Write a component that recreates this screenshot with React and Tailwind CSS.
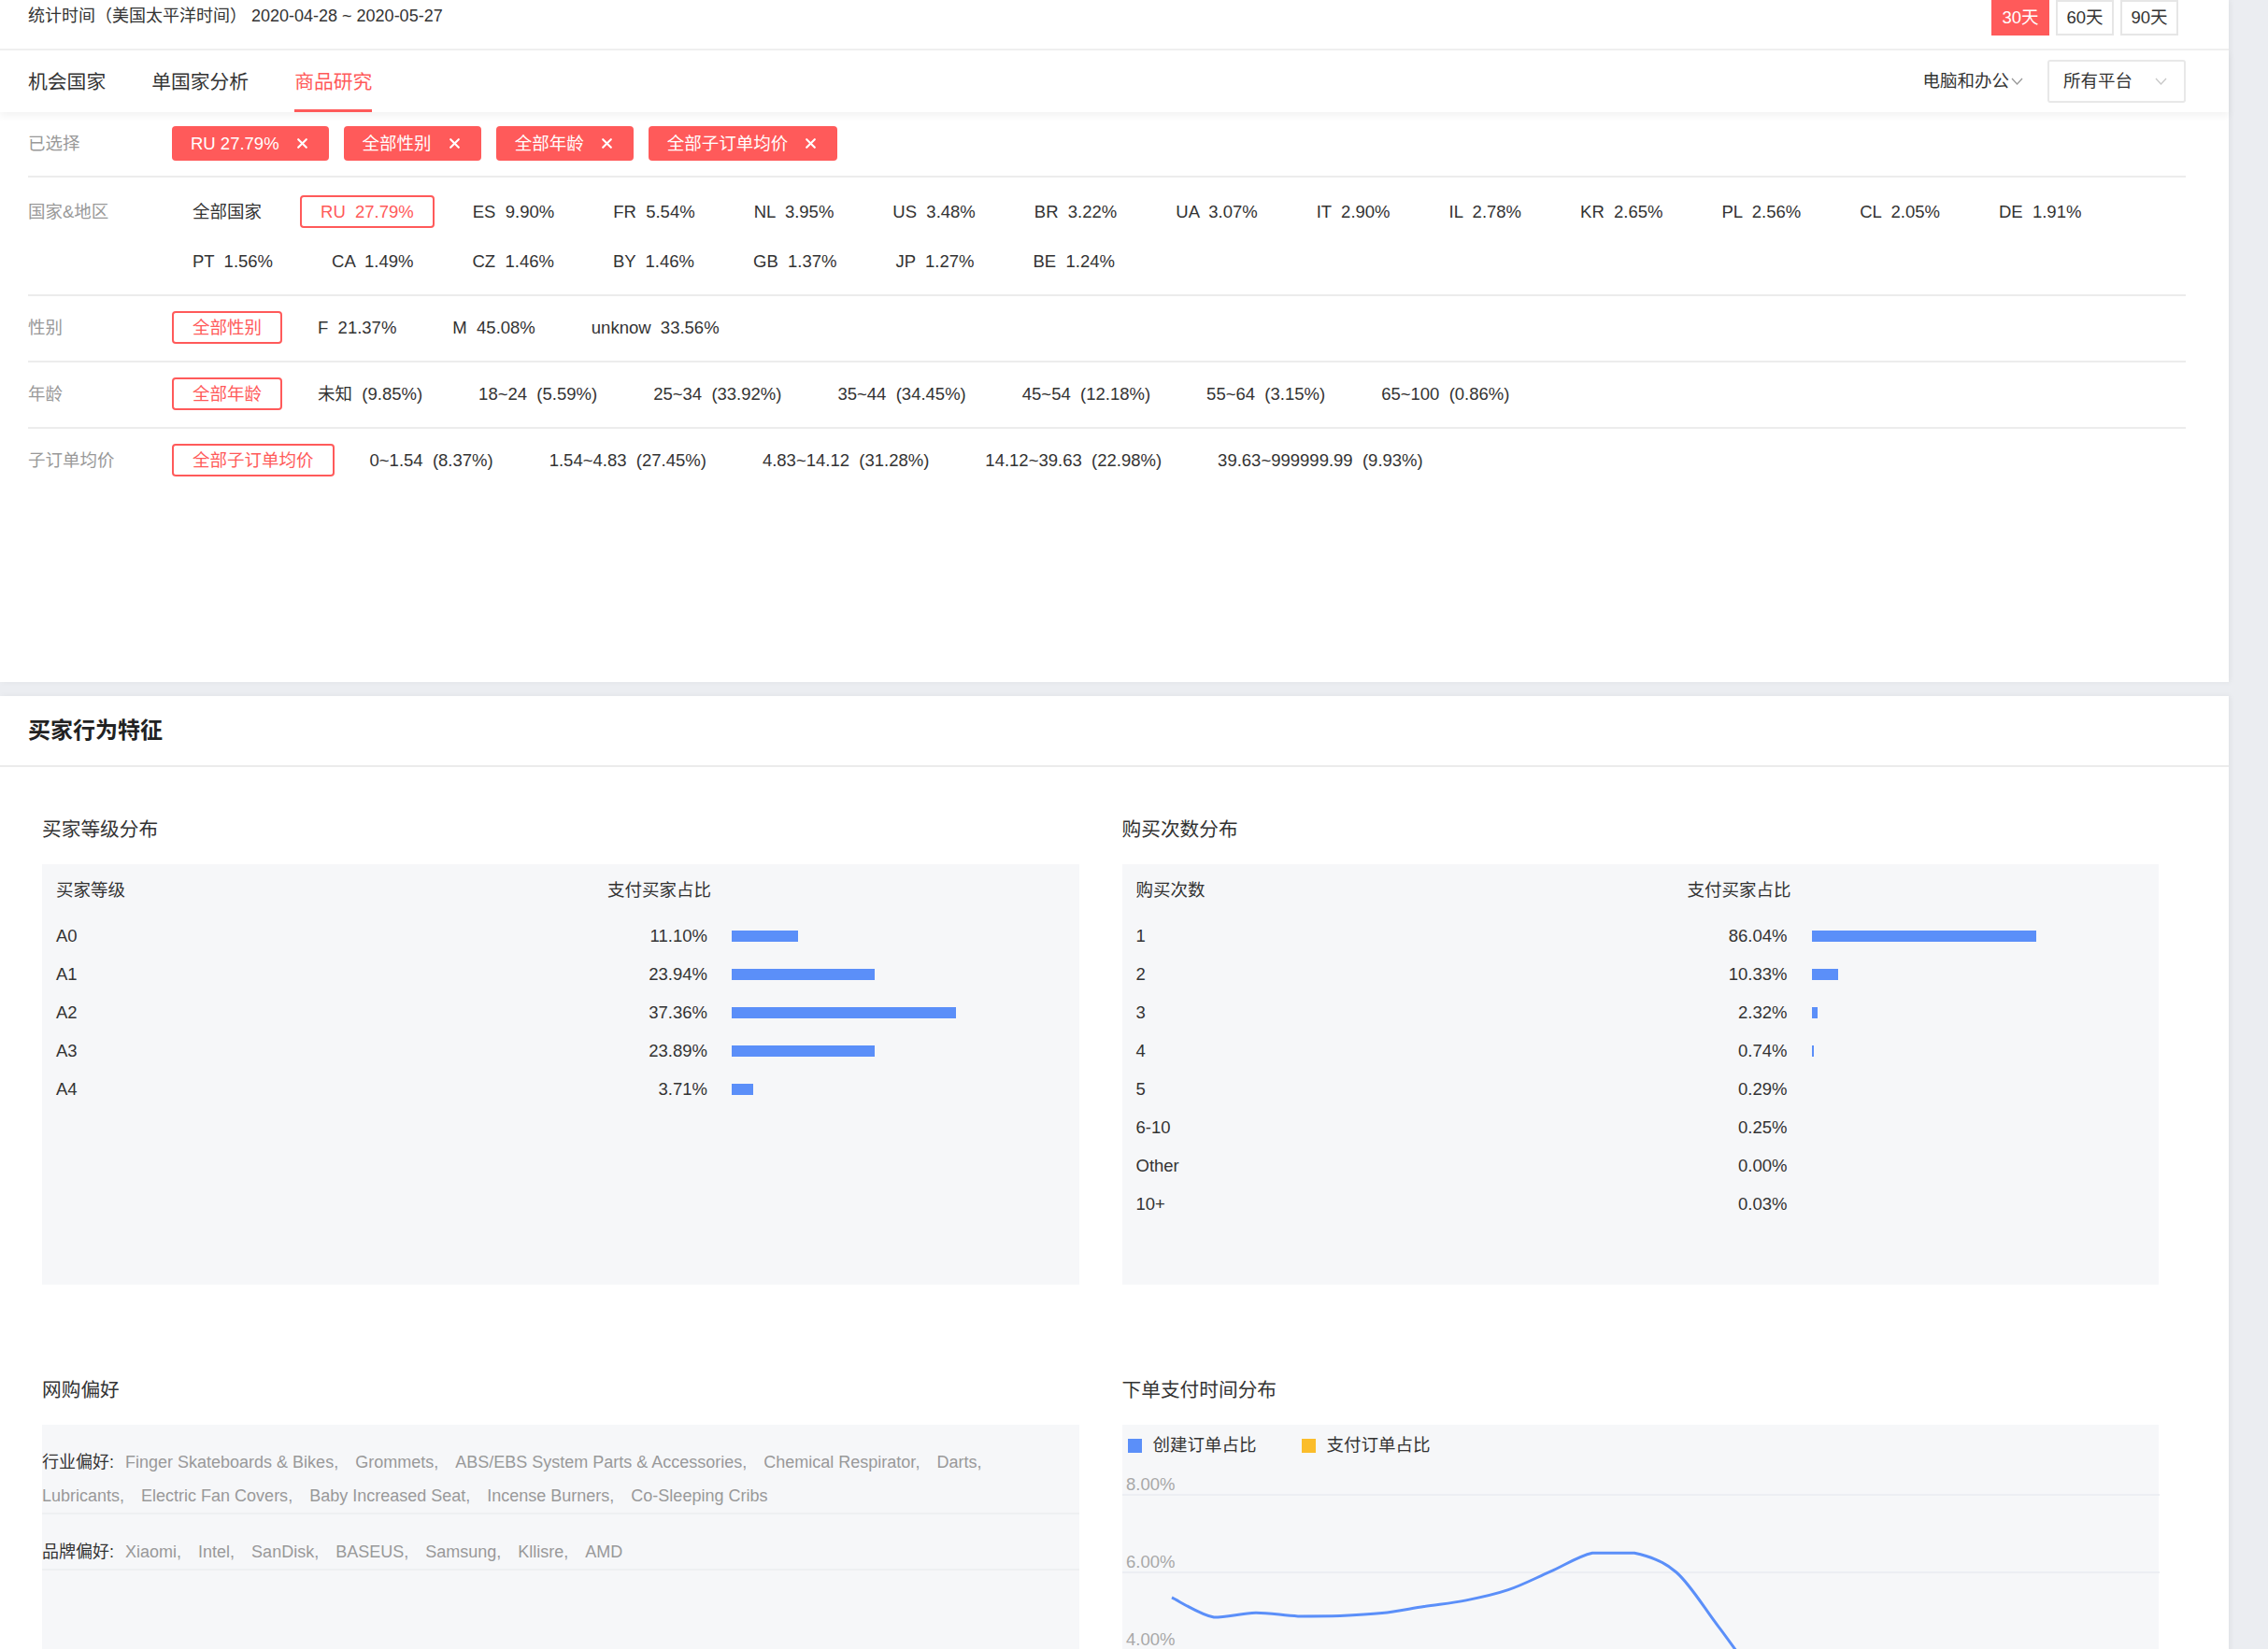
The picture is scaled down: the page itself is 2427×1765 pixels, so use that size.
import React from "react";

function Chevron({ color = "#999" }) {
  return (
    <svg width="13" height="8" viewBox="0 0 13 8">
      <polyline points="1,1 6.5,7 12,1" fill="none" stroke={color} strokeWidth="1.3" />
    </svg>
  );
}

function XMark() {
  return (
    <svg width="11" height="11" viewBox="0 0 11 11">
      <path d="M1.2 1.2 L9.8 9.8 M9.8 1.2 L1.2 9.8" stroke="white" strokeWidth="2.1" strokeLinecap="round" />
    </svg>
  );
}

function Chip({ children }) {
  return (
    <div className="h-[37px] pl-[20px] pr-[23px] rounded-[4px] bg-[#ff5a5a] text-white flex items-center gap-[19px] whitespace-pre">
      <span>{children}</span>
      <XMark />
    </div>
  );
}

function Opt({ children, active }) {
  return active ? (
    <div className="h-[35px] px-[20px] border-2 border-[#ff5a5a] text-[#ff5a5a] rounded-[4px] flex items-center whitespace-pre">
      {children}
    </div>
  ) : (
    <div className="h-[35px] px-[20px] border-2 border-transparent flex items-center whitespace-pre">
      {children}
    </div>
  );
}

function FilterRow({ label, children, first }) {
  return (
    <div
      className={
        first
          ? "flex border-t-2 border-[#ececec] pt-[19px] pb-[18px]"
          : "flex border-t-2 border-[#ececec] pt-[16px] pb-[18px]"
      }
    >
      <div className="w-[154px] shrink-0 h-[35px] flex items-center text-[#999]">{label}</div>
      <div
        className={
          first
            ? "flex flex-wrap gap-x-[19px] gap-y-[18px] flex-1"
            : "flex flex-wrap gap-x-[16px] gap-y-[18px] flex-1"
        }
      >
        {children}
      </div>
    </div>
  );
}

const countries = [
  ["RU", "27.79%"], ["ES", "9.90%"], ["FR", "5.54%"], ["NL", "3.95%"], ["US", "3.48%"],
  ["BR", "3.22%"], ["UA", "3.07%"], ["IT", "2.90%"], ["IL", "2.78%"], ["KR", "2.65%"],
  ["PL", "2.56%"], ["CL", "2.05%"], ["DE", "1.91%"], ["PT", "1.56%"], ["CA", "1.49%"],
  ["CZ", "1.46%"], ["BY", "1.46%"], ["GB", "1.37%"], ["JP", "1.27%"], ["BE", "1.24%"],
];
const genders = [["F", "21.37%"], ["M", "45.08%"], ["unknow", "33.56%"]];
const ages = [
  ["未知", "(9.85%)"], ["18~24", "(5.59%)"], ["25~34", "(33.92%)"], ["35~44", "(34.45%)"],
  ["45~54", "(12.18%)"], ["55~64", "(3.15%)"], ["65~100", "(0.86%)"],
];
const prices = [
  ["0~1.54", "(8.37%)"], ["1.54~4.83", "(27.45%)"], ["4.83~14.12", "(31.28%)"],
  ["14.12~39.63", "(22.98%)"], ["39.63~999999.99", "(9.93%)"],
];

const levels = [["A0", 11.1], ["A1", 23.94], ["A2", 37.36], ["A3", 23.89], ["A4", 3.71]];
const counts = [
  ["1", 86.04], ["2", 10.33], ["3", 2.32], ["4", 0.74], ["5", 0.29],
  ["6-10", 0.25], ["Other", 0.0], ["10+", 0.03],
];

function DistTable({ head, rows }) {
  const max = Math.max(...rows.map((r) => r[1]));
  return (
    <div className="h-[450px] bg-[#f6f7f9]">
      <div className="h-[56px] flex items-center pl-[15px]">
        <div className="w-[590px]">{head}</div>
        <div className="w-[107px] text-right whitespace-nowrap">支付买家占比</div>
      </div>
      {rows.map(([k, v]) => (
        <div key={k} className="h-[41px] flex items-center pl-[15px]">
          <div className="w-[590px]">{k}</div>
          <div className="w-[107px] text-right">{v.toFixed(2)}%</div>
          <div className="ml-[26px] h-[12px] bg-[#5b8ff9]" style={{ width: Math.floor((v / max) * 240) }} />
        </div>
      ))}
    </div>
  );
}

const industry = [
  "Finger Skateboards & Bikes", "Grommets", "ABS/EBS System Parts & Accessories",
  "Chemical Respirator", "Darts", "Lubricants", "Electric Fan Covers",
  "Baby Increased Seat", "Incense Burners", "Co-Sleeping Cribs",
];
const brands = ["Xiaomi", "Intel", "SanDisk", "BASEUS", "Samsung", "Kllisre", "AMD"];

function PrefBlock({ label, items }) {
  return (
    <div className="pt-[22px] border-b-2 border-[#eef0f2]">
      <div className="flex flex-wrap items-center leading-[36px] pr-[40px] text-[18px]">
        <span className="mr-[12px] whitespace-nowrap">{label}:</span>
        {items.map((t, i) => (
          <span key={t} className="mr-[18px] whitespace-nowrap text-[#999]">
            {t}
            {i < items.length - 1 ? "," : ""}
          </span>
        ))}
      </div>
    </div>
  );
}

function smoothPath(pts) {
  let d = `M${pts[0][0]},${pts[0][1]}`;
  const clamp = (v, a, b) => Math.min(Math.max(v, Math.min(a, b)), Math.max(a, b));
  for (let i = 0; i < pts.length - 1; i++) {
    const p0 = pts[i - 1] || pts[i];
    const p1 = pts[i];
    const p2 = pts[i + 1];
    const p3 = pts[i + 2] || p2;
    const c1x = p1[0] + (p2[0] - p0[0]) / 6;
    const c1y = clamp(p1[1] + (p2[1] - p0[1]) / 6, p1[1], p2[1]);
    const c2x = p2[0] - (p3[0] - p1[0]) / 6;
    const c2y = clamp(p2[1] - (p3[1] - p1[1]) / 6, p1[1], p2[1]);
    d += ` C${c1x.toFixed(1)},${c1y.toFixed(1)} ${c2x.toFixed(1)},${c2y.toFixed(1)} ${p2[0]},${p2[1].toFixed(1)}`;
  }
  return d;
}

const created = [
  5.35, 4.84, 4.96, 4.87, 4.88, 4.95, 5.12, 5.28, 5.55, 6.02, 6.5, 6.5, 6.0, 4.6,
  3.2, 2.5, 2.2, 2.3, 2.6, 2.9, 3.1, 3.3, 3.4, 3.5,
];

function TimeChart() {
  const y = (v) => 31 + (8 - v) * 41.5;
  const pts = created.map((v, i) => [53 + 45 * i, y(v)]);
  const grid = [
    ["8.00%", 8],
    ["6.00%", 6],
    ["4.00%", 4],
    ["2.00%", 2],
  ];
  return (
    <svg width="1110" height="380" className="block">
      {grid.map(([t, v]) => (
        <g key={t}>
          <line x1="0" x2="1110" y1={y(v)} y2={y(v)} stroke="#eceef3" strokeWidth="2" />
          <text x="4" y={y(v) - 5.5} fill="#a8a8a8" fontSize="18.5" fontFamily="Liberation Sans, sans-serif">
            {t}
          </text>
        </g>
      ))}
      <path d={smoothPath(pts)} fill="none" stroke="#5b8ff9" strokeWidth="3" strokeLinejoin="round" />
    </svg>
  );
}

export default function App() {
  return (
    <div className="min-h-screen bg-[#ebedf1] font-['Liberation_Sans','Noto_Sans_CJK_SC',sans-serif] text-[18.5px] text-[#333]">
      {/* Top panel */}
      <div className="w-[2385px] h-[730px] bg-white shadow-[2px_0_6px_rgba(0,0,0,0.05)]">
        <div className="h-[54px] border-b-2 border-[#f0f0f0] flex justify-between items-start pl-[30px] pr-[54px]">
          <div className="mt-[4px] leading-[26px] whitespace-pre text-[18px]">统计时间（美国太平洋时间） 2020-04-28 ~ 2020-05-27</div>
          <div className="flex gap-[7px]">
            <div className="w-[62px] h-[38px] bg-[#ff5a5a] text-white flex items-center justify-center">30天</div>
            <div className="w-[62px] h-[38px] border-2 border-[#e6e6e6] flex items-center justify-center">60天</div>
            <div className="w-[62px] h-[38px] border-2 border-[#e6e6e6] flex items-center justify-center">90天</div>
          </div>
        </div>
        <div className="relative z-10 h-[66px] flex justify-between pl-[30px] pr-[46px] bg-white shadow-[0_4px_8px_rgba(0,0,0,0.05)]">
          <div className="flex gap-[49px] h-full text-[20.8px]">
            <div className="h-full flex items-center pt-[5px] border-b-[3px] border-transparent">机会国家</div>
            <div className="h-full flex items-center pt-[5px] border-b-[3px] border-transparent">单国家分析</div>
            <div className="h-full flex items-center pt-[5px] border-b-[3px] border-[#ff5a5a] text-[#ff5a5a]">商品研究</div>
          </div>
          <div className="flex items-center">
            <div className="flex items-center gap-[2px]">
              <span>电脑和办公</span>
              <Chevron color="#999" />
            </div>
            <div className="ml-[26px] w-[148px] h-[46px] border-2 border-[#e8e8e8] rounded-[3px] flex items-center justify-between pl-[15px] pr-[18px]">
              <span>所有平台</span>
              <Chevron color="#c8c8c8" />
            </div>
          </div>
        </div>

        <div className="ml-[30px] w-[2309px]">
          <div className="flex pt-[15px] pb-[16px]">
            <div className="w-[154px] shrink-0 h-[37px] flex items-center text-[#999]">已选择</div>
            <div className="flex gap-[16px]">
              <Chip>RU 27.79%</Chip>
              <Chip>全部性别</Chip>
              <Chip>全部年龄</Chip>
              <Chip>全部子订单均价</Chip>
            </div>
          </div>
          <FilterRow label="国家&地区" first>
            <Opt>全部国家</Opt>
            {countries.map(([c, p], i) => (
              <Opt key={c} active={i === 0}>
                {c}  {p}
              </Opt>
            ))}
          </FilterRow>
          <FilterRow label="性别">
            <Opt active>全部性别</Opt>
            {genders.map(([c, p]) => (
              <Opt key={c}>
                {c}  {p}
              </Opt>
            ))}
          </FilterRow>
          <FilterRow label="年龄">
            <Opt active>全部年龄</Opt>
            {ages.map(([c, p]) => (
              <Opt key={c}>
                {c}  {p}
              </Opt>
            ))}
          </FilterRow>
          <FilterRow label="子订单均价">
            <Opt active>全部子订单均价</Opt>
            {prices.map(([c, p]) => (
              <Opt key={c}>
                {c}  {p}
              </Opt>
            ))}
          </FilterRow>
        </div>
      </div>

      {/* Buyer behaviour panel */}
      <div className="mt-[15px] w-[2385px] bg-white shadow-[2px_0_6px_rgba(0,0,0,0.05)] pb-[40px]">
        <div className="h-[76px] border-b-2 border-[#ebebeb] flex items-center pl-[30px] text-[24px] font-bold text-[#222]">
          买家行为特征
        </div>
        <div className="pt-[52px] pl-[45px] w-[2310px] grid grid-cols-2 gap-x-[46px] gap-y-[98px]">
          <div>
            <div className="h-[30px] leading-[30px] text-[20.7px] mb-[22px]">买家等级分布</div>
            <DistTable head="买家等级" rows={levels} />
          </div>
          <div>
            <div className="h-[30px] leading-[30px] text-[20.7px] mb-[22px]">购买次数分布</div>
            <DistTable head="购买次数" rows={counts} />
          </div>
          <div>
            <div className="h-[30px] leading-[30px] text-[20.7px] mb-[22px]">网购偏好</div>
            <div className="h-[420px] bg-[#f6f7f9]">
              <PrefBlock label="行业偏好" items={industry} />
              <PrefBlock label="品牌偏好" items={brands} />
            </div>
          </div>
          <div>
            <div className="h-[30px] leading-[30px] text-[20.7px] mb-[22px]">下单支付时间分布</div>
            <div className="h-[420px] bg-[#f6f7f9]">
              <div className="h-[44px] flex items-center pl-[6px]">
                <div className="w-[15px] h-[15px] bg-[#5b8ff9]" />
                <span className="ml-[12px]">创建订单占比</span>
                <div className="ml-[48px] w-[15px] h-[15px] bg-[#fbbd2b]" />
                <span className="ml-[12px]">支付订单占比</span>
              </div>
              <TimeChart />
            </div>
          </div>
        </div>
      </div>
    </div>
  );
}
